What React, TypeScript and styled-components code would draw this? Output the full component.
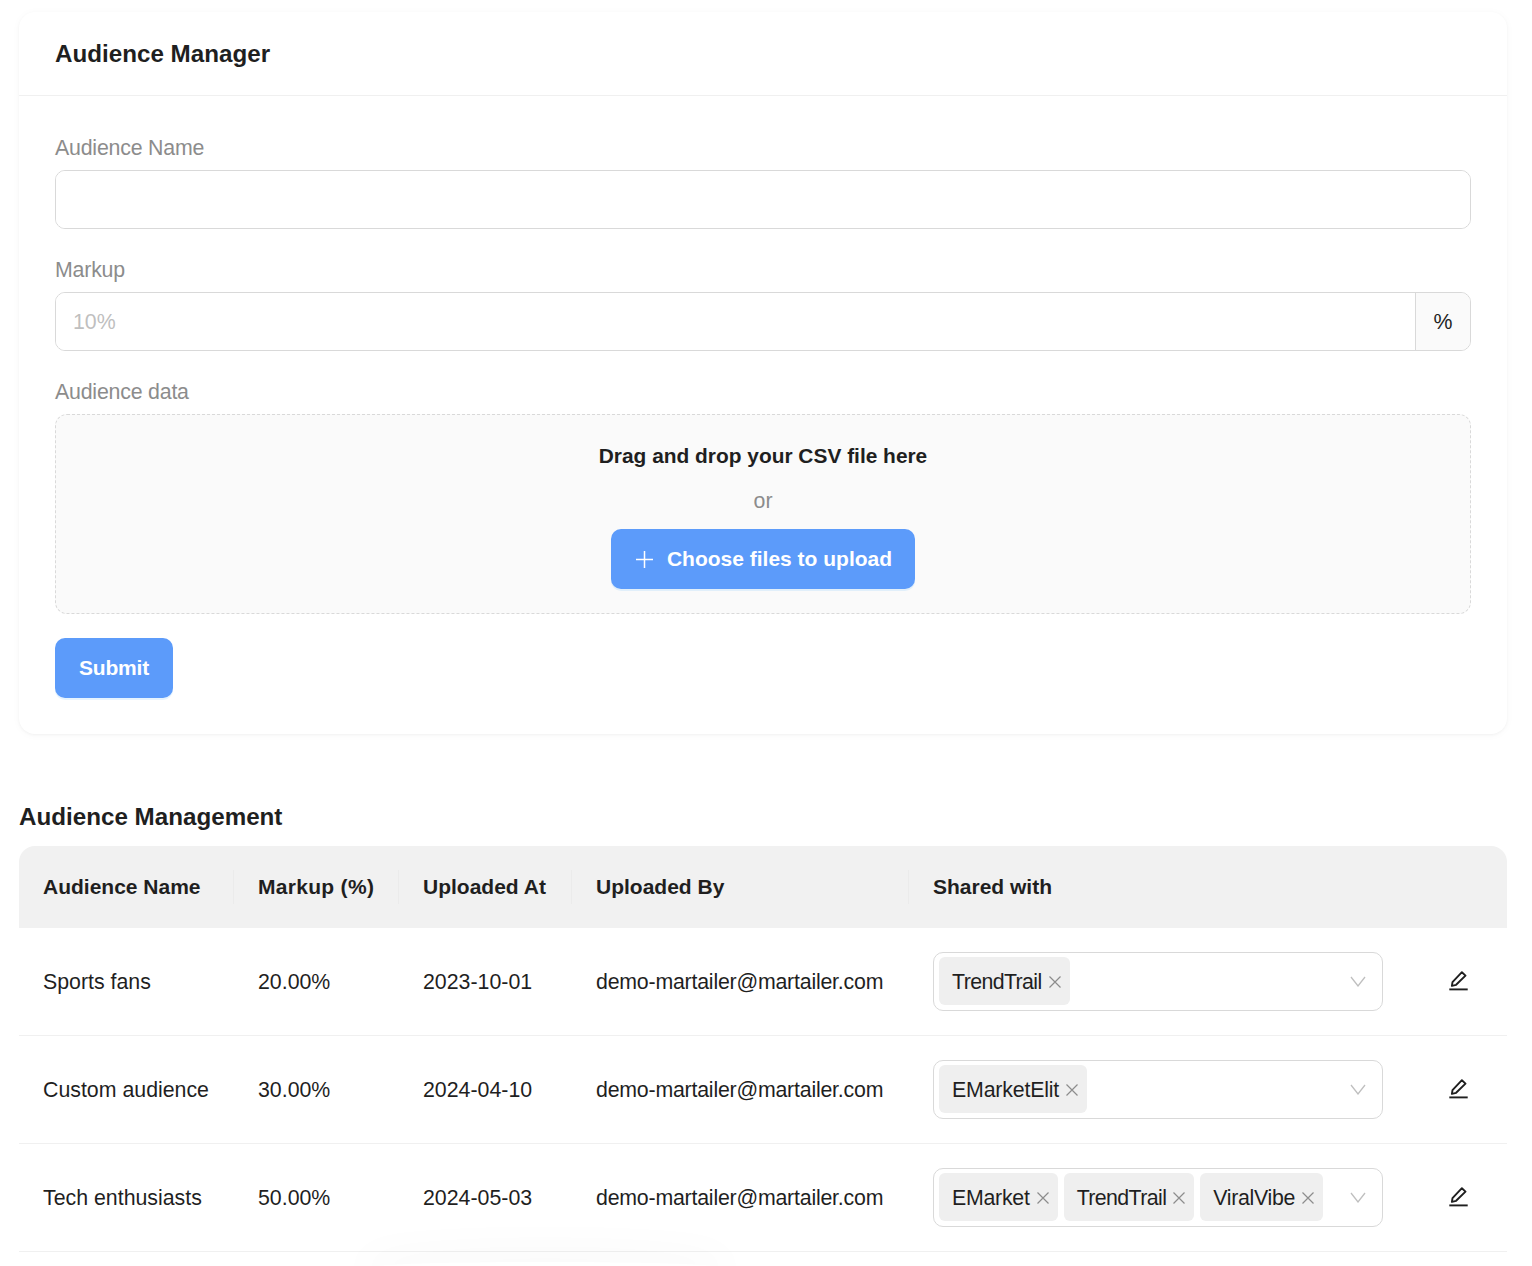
import React from "react";
import styled, { createGlobalStyle } from "styled-components";

const Global = createGlobalStyle`
  html, body { margin: 0; padding: 0; background: #fff; overflow: hidden; }
  body { font-family: "Liberation Sans", Arial, sans-serif; color: #1f1f1f; }
  * { box-sizing: border-box; }
`;

const Page = styled.div`
  padding: 12px 25px 0 19px;
  height: 1266px;
  overflow: hidden;
`;

const Card = styled.section`
  height: 722px;
  background: #fff;
  border-radius: 16px;
  box-shadow: 0 1px 3px rgba(0,0,0,.04), 0 1px 8px rgba(0,0,0,.03);
`;

const CardHead = styled.header`
  height: 84px;
  padding: 0 36px;
  display: flex;
  align-items: center;
  border-bottom: 1px solid #f0f0f0;
  font-size: 24.2px;
  font-weight: 700;
`;

const CardBody = styled.div`
  padding: 36px 36px 0;
  display: flex;
  flex-direction: column;
`;

const Field = styled.div`
  display: flex;
  flex-direction: column;
  margin-bottom: 25px;
`;

const Label = styled.label`
  height: 38px;
  display: flex;
  align-items: flex-start;
  font-size: 21.33px;
  line-height: 33px;
  letter-spacing: -0.2px;
  color: #8c8c8c;
`;

const InputRow = styled.div`
  display: flex;
  height: 59px;
  border: 1px solid #d9d9d9;
  border-radius: 10px;
  overflow: hidden;
`;

const Input = styled.input`
  flex: 1;
  min-width: 0;
  border: 0;
  outline: 0;
  padding: 2px 17px 0;
  font: 21.33px "Liberation Sans", Arial, sans-serif;
  background: #fff;
  &::placeholder { color: #bfbfbf; }
`;

const Addon = styled.div`
  width: 55px;
  padding-top: 2px;
  border-left: 1px solid #d9d9d9;
  background: #fafafa;
  display: flex;
  align-items: center;
  justify-content: center;
  font-size: 21.33px;
`;

const Drop = styled.div`
  height: 200px;
  background: #fafafa;
  border: 1px dashed #d9d9d9;
  border-radius: 12px;
  display: flex;
  flex-direction: column;
  align-items: center;
  padding-top: 25px;
  margin-bottom: 24px;
`;

const DropTitle = styled.div`
  font-size: 20.9px;
  font-weight: 700;
  line-height: 32px;
`;

const Or = styled.div`
  font-size: 21.33px;
  line-height: 32px;
  color: #8c8c8c;
  margin-top: 13px;
  margin-bottom: 12px;
`;

const PrimaryButton = styled.button`
  height: 60px;
  border: 0;
  border-radius: 10px;
  padding: 0 24px;
  background: #5c9bfa;
  color: #fff;
  font: 700 21px "Liberation Sans", Arial, sans-serif;
  letter-spacing: -0.2px;
  display: inline-flex;
  align-items: center;
  gap: 14px;
  align-self: flex-start;
  box-shadow: 0 2px 0 rgba(5,145,255,.1);
`;

const UploadButton = styled(PrimaryButton)`
  align-self: center;
  letter-spacing: 0;
  padding: 0 23px 0 25px;
`;

const SectionTitle = styled.h2`
  margin: 67px 0 13px;
  font-size: 24.2px;
  line-height: 32px;
  font-weight: 700;
`;

const Table = styled.table`
  width: 1488px;
  border-collapse: separate;
  border-spacing: 0;
  table-layout: fixed;
  font-size: 21.33px;
`;

const Th = styled.th`
  position: relative;
  height: 82px;
  background: #f1f1f1;
  padding: 0 24px;
  text-align: left;
  font-size: 21px;
  font-weight: 700;
  white-space: nowrap;
  &:first-child { border-top-left-radius: 16px; }
  &:last-child { border-top-right-radius: 16px; }
  &:nth-child(2) { letter-spacing: 0.3px; }
  &:not(:last-child):not(:nth-last-child(2))::after {
    content: "";
    position: absolute;
    right: 0;
    top: 24px;
    height: 34px;
    width: 1px;
    background: #ebebeb;
  }
  &:nth-child(2)::after { right: 1px; }
`;

const Td = styled.td`
  height: 108px;
  padding: 0 24px;
  border-bottom: 1px solid #f0f0f0;
  white-space: nowrap;
`;

const TextCell = styled(Td)`
  padding-top: 2px;
`;

const EmailCell = styled(TextCell)`
  letter-spacing: -0.21px;
`;

const SelectBox = styled.div`
  height: 59px;
  border: 1px solid #d9d9d9;
  border-radius: 10px;
  padding: 4px 16px 4px 5px;
  display: flex;
  align-items: flex-start;
  gap: 6px;
`;

const Tag = styled.span<{ $spacing: number }>`
  height: 48px;
  background: #efefef;
  border-radius: 6px;
  padding: 2px 9px 0 13px;
  display: inline-flex;
  align-items: center;
  gap: 7px;
  letter-spacing: ${(p) => p.$spacing}px;
`;

const Chevron = styled.svg`
  margin-left: auto;
  align-self: center;
  flex: none;
`;

const EditButton = styled.span`
  display: flex;
  justify-content: center;
  padding-left: 4px;
  margin-top: -2px;
`;

const Glow = styled.div`
  position: fixed;
  left: 375px;
  top: 1262px;
  width: 340px;
  height: 10px;
  border-radius: 50%;
  box-shadow: 0 0 40px 16px rgba(0,0,0,.022);
`;

const Close = () => (
  <svg width="12" height="12" viewBox="0 0 12 12" fill="none" stroke="#8c8c8c" strokeWidth="1.2">
    <path d="M.5.5l11 11M11.5.5l-11 11" />
  </svg>
);

const Plus = () => (
  <svg width="17" height="17" viewBox="0 0 17 17" fill="none" stroke="#fff" strokeWidth="1.5">
    <path d="M8.5 0v17M0 8.5h17" />
  </svg>
);

const Pencil = () => (
  <svg width="20" height="20" viewBox="0 0 20 20" fill="none" stroke="#1f1f1f" strokeWidth="1.9" strokeLinejoin="round">
    <path d="M2.9 14.9l.6-3.7L12.9 1.2l3.6 3.4-9.4 9.2-4.2 1.1z" />
    <path d="M.3 18.4h18.4" />
  </svg>
);

const tagSpacing: Record<string, number> = {
  TrendTrail: -0.6,
  EMarketElit: -0.18,
  EMarket: -0.25,
  ViralVibe: -0.3,
};

const rows = [
  { name: "Sports fans", markup: "20.00%", at: "2023-10-01", tags: ["TrendTrail"] },
  { name: "Custom audience", markup: "30.00%", at: "2024-04-10", tags: ["EMarketElit"] },
  { name: "Tech enthusiasts", markup: "50.00%", at: "2024-05-03", tags: ["EMarket", "TrendTrail", "ViralVibe"] },
];

export default function App() {
  return (
    <Page>
      <Global />
      <Card>
        <CardHead>Audience Manager</CardHead>
        <CardBody>
          <Field>
            <Label>Audience Name</Label>
            <InputRow><Input /></InputRow>
          </Field>
          <Field>
            <Label>Markup</Label>
            <InputRow>
              <Input placeholder="10%" />
              <Addon>%</Addon>
            </InputRow>
          </Field>
          <Label>Audience data</Label>
          <Drop>
            <DropTitle>Drag and drop your CSV file here</DropTitle>
            <Or>or</Or>
            <UploadButton type="button"><Plus />Choose files to upload</UploadButton>
          </Drop>
          <PrimaryButton type="button">Submit</PrimaryButton>
        </CardBody>
      </Card>
      <SectionTitle>Audience Management</SectionTitle>
      <Table>
        <colgroup>
          <col style={{ width: 215 }} />
          <col style={{ width: 165 }} />
          <col style={{ width: 173 }} />
          <col style={{ width: 337 }} />
          <col style={{ width: 498 }} />
          <col style={{ width: 100 }} />
        </colgroup>
        <thead>
          <tr>
            <Th>Audience Name</Th>
            <Th>Markup (%)</Th>
            <Th>Uploaded At</Th>
            <Th>Uploaded By</Th>
            <Th>Shared with</Th>
            <Th />
          </tr>
        </thead>
        <tbody>
          {rows.map((r) => (
            <tr key={r.name}>
              <TextCell>{r.name}</TextCell>
              <TextCell>{r.markup}</TextCell>
              <TextCell>{r.at}</TextCell>
              <EmailCell>demo-martailer@martailer.com</EmailCell>
              <Td>
                <SelectBox>
                  {r.tags.map((t) => (
                    <Tag key={t} $spacing={tagSpacing[t]}>{t}<Close /></Tag>
                  ))}
                  <Chevron width="16" height="11" viewBox="0 0 16 11" fill="none" stroke="#bfbfbf" strokeWidth="1.3">
                    <path d="M1 1l7 9 7-9" />
                  </Chevron>
                </SelectBox>
              </Td>
              <Td><EditButton><Pencil /></EditButton></Td>
            </tr>
          ))}
        </tbody>
      </Table>
      <Glow />
    </Page>
  );
}
